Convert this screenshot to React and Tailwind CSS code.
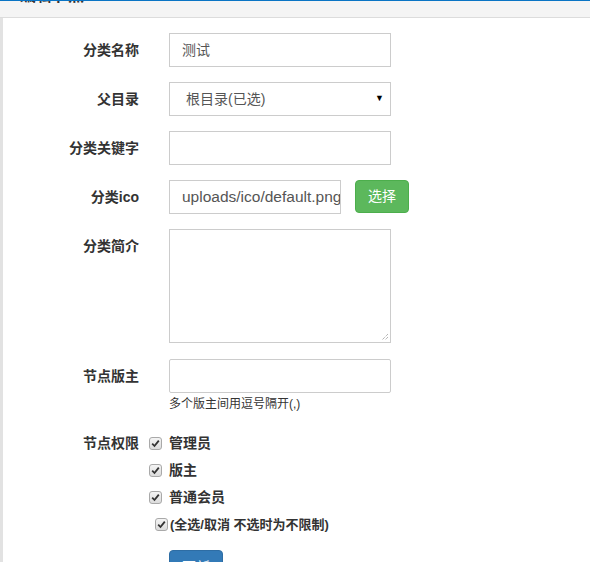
const font = 'font-["Liberation_Sans","Noto_Sans_CJK_SC",sans-serif]';

function Label({ children, className = '' }) {
    return (
        <div className={`w-[139px] shrink-0 text-right text-[14px] font-bold leading-[20px] text-[#333] ${className}`}>
            {children}
        </div>
    );
}

function Check({ className = '' }) {
    return (
        <span className={`flex h-[13px] w-[13px] items-center justify-center rounded-[3px] border border-[#a9a9a9] bg-gradient-to-b from-[#f4f4f4] to-[#dcdcdc] ${className}`}>
            <svg width="9" height="9" viewBox="0 0 9 9">
                <path d="M1.2 4.6 L3.5 7 L7.8 1.6" fill="none" stroke="#333" strokeWidth="1.8" />
            </svg>
        </span>
    );
}

const perms = ['管理员', '版主', '普通会员'];

export default function App() {
    return (
        <div className={`h-[562px] w-[590px] overflow-hidden bg-white ${font}`}>
            <div className="h-[18px] overflow-hidden border-t border-b border-t-[#0a74c4] border-b-[#dcdcdc] bg-[#f4f4f4]">
                <div className="-mt-[15px] pl-[20px] text-[16px] font-bold leading-[20px] text-[#333]">编辑节点</div>
            </div>
            <div className="flex">
                <div className="h-[544px] w-[3px] shrink-0 bg-[#e2e2e2]" />
                <div className="flex flex-1 flex-col pt-[15px]">
                    <div className="-ml-[3px] flex flex-col gap-[15px]">
                        <div className="flex">
                            <Label className="pt-[7px]">分类名称</Label>
                            <div className="ml-[30px] flex h-[34px] w-[222px] items-center border border-[#ccc] px-[12px] text-[14px] text-[#555]">测试</div>
                        </div>
                        <div className="flex">
                            <Label className="pt-[7px]">父目录</Label>
                            <div className="ml-[30px] flex h-[34px] w-[222px] items-center justify-between border border-[#ccc] pl-[16px] pr-[6px] text-[14px] text-[#555]">
                                <span>根目录(已选)</span>
                                <span className="text-[9px] text-black">▼</span>
                            </div>
                        </div>
                        <div className="flex">
                            <Label className="pt-[7px]">分类关键字</Label>
                            <div className="ml-[30px] h-[34px] w-[222px] border border-[#ccc]" />
                        </div>
                        <div className="flex">
                            <Label className="pt-[7px]">分类ico</Label>
                            <div className="ml-[30px] flex h-[34px] w-[172px] items-center overflow-hidden whitespace-nowrap border border-[#ccc] pl-[12px] text-[15.5px] text-[#555]">
                                uploads/ico/default.png
                            </div>
                            <button className="ml-[14px] h-[33px] w-[54px] rounded-[4px] border border-[#4cae4c] bg-[#5cb85c] text-[14px] text-white">
                                选择
                            </button>
                        </div>
                        <div className="flex">
                            <Label className="pt-[7px]">分类简介</Label>
                            <div className="relative ml-[30px] h-[114px] w-[222px] border border-[#ccc]">
                                <svg className="absolute right-[1px] bottom-[1px]" width="8" height="8" viewBox="0 0 8 8">
                                    <path d="M7 1 L1 7 M7 4 L4 7" stroke="#777" strokeWidth="0.8" strokeDasharray="1 1" />
                                </svg>
                            </div>
                        </div>
                    </div>
                    <div className="-ml-[3px] mt-[16px] flex">
                        <Label className="pt-[7px]">节点版主</Label>
                        <div className="ml-[30px] flex flex-col">
                            <div className="h-[34px] w-[222px] rounded-[2px] border border-[#ccc]" />
                            <div className="mt-[3px] text-[12px] leading-[17px] text-[#333]">多个版主间用逗号隔开(,)</div>
                        </div>
                    </div>
                    <div className="-ml-[3px] mt-[17px] flex">
                        <div className="w-[139px] shrink-0 text-right text-[14px] font-bold leading-[27px] text-[#333]">节点权限</div>
                        <div className="ml-[10px] flex flex-col text-[14px] font-bold leading-[27px] text-[#333]">
                            {perms.map((p) => (
                                <div key={p} className="flex items-center">
                                    <Check className="mr-[7px]" />
                                    <span>{p}</span>
                                </div>
                            ))}
                            <div className="flex items-center pl-[6px] text-[13px]">
                                <Check className="mr-[2px]" />
                                <span>(全选/取消 不选时为不限制)</span>
                            </div>
                            <button className="mt-[12px] ml-[20px] h-[34px] w-[54px] rounded-[4px] border border-[#2e6da4] bg-[#337ab7] text-[14px] font-normal text-white">
                                更新
                            </button>
                        </div>
                    </div>
                </div>
            </div>
        </div>
    );
}
